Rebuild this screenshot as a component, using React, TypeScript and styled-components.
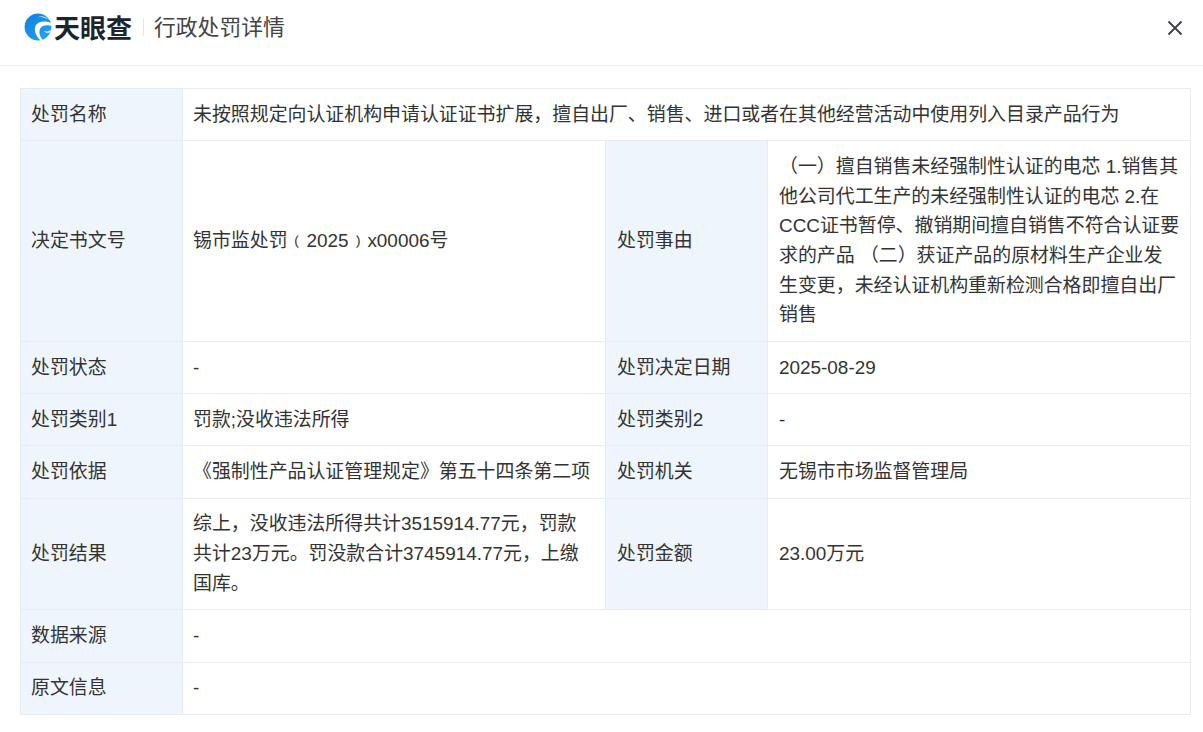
import React from "react";
import styled, { createGlobalStyle } from "styled-components";

const Global = createGlobalStyle`
  html, body { margin: 0; padding: 0; background: #fff; }
  body { font-family: "Liberation Sans", "Noto Sans CJK SC", sans-serif; color: #333; }
`;
const Page = styled.div`
  width: 1203px;
  height: 732px;
  overflow: hidden;
`;
const Header = styled.header`
  height: 54px;
  border-bottom: 1px solid #eef0f3;
  display: flex;
  align-items: flex-start;
  padding: 11px 20px 0 24px;
`;
const Logo = styled.div`
  display: flex;
  align-items: center;
  height: 32px;
  gap: 2px;
`;
const LogoText = styled.span`
  font-family: "Noto Sans CJK SC", sans-serif;
  font-weight: 700;
  font-size: 26px;
  line-height: 32px;
  color: #1c2430;
`;
const Divider = styled.span`
  width: 1px;
  height: 18px;
  background: #e3e6ea;
  margin: 0 10px 0 9px;
`;
const Title = styled.h1`
  margin: -1px 0 0;
  font-family: "Noto Sans CJK SC", sans-serif;
  font-weight: 400;
  font-size: 21.8px;
  line-height: 32px;
  color: #444;
  flex: 1;
`;
const Close = styled.button`
  border: 0;
  background: none;
  padding: 0;
  width: 16px;
  height: 16px;
  margin: 9px 0 0;
  display: block;
`;
const Body = styled.main`
  padding: 22px 12px 0 20px;
`;
const Table = styled.table`
  width: 1170px;
  table-layout: fixed;
  border-collapse: collapse;
  font-size: 18.92px;
  line-height: 29.7px;
  font-family: "Liberation Sans", "Noto Sans CJK SC", sans-serif;
`;
const Row = styled.tr<{ $h: number; $lift?: boolean }>`
  height: ${(p) => p.$h}px;
  & > * {
    padding-bottom: ${(p) => (p.$lift ? 2 : 0)}px;
  }
`;
const Label = styled.th<{ $inset?: number }>`
  background: #eef5fd;
  border: 1px solid #e8ecf1;
  padding-top: 0;
  padding-right: 10px;
  padding-left: ${(p) => p.$inset ?? 10}px;
  font-weight: 400;
  text-align: left;
  color: #333;
`;
const Value = styled.td<{ $inset?: number }>`
  border: 1px solid #e8ecf1;
  padding-top: 0;
  padding-right: 10.4px;
  padding-left: ${(p) => p.$inset ?? 10}px;
  color: #333;
`;

const Swirl = () => (
  <svg width="28" height="28" viewBox="0 0 28 28" aria-hidden="true">
    <defs>
      <linearGradient id="g" x1="0" y1="0" x2="1" y2="1">
        <stop offset="0" stopColor="#0b7fe0" />
        <stop offset="1" stopColor="#27a6ee" />
      </linearGradient>
    </defs>
    <circle cx="14" cy="14" r="13.4" fill="url(#g)" />
    <path d="M28 10.5 C22 7.5 15 8 12 12 C9.5 16 11 22 16.5 27.6 L18.8 27.2 C15.5 23 14.5 18.5 16.5 15 C18.5 12 23 11.5 28 12.8 Z" fill="#fff" />
    <path d="M14 3 C18.5 2.6 22.5 4 25.5 7.2 C22 5.2 18 4 14 3 Z" fill="#fff" opacity=".8" />
    <path d="M20 18 C22.5 19 25 18.5 27.5 16.5 L27 18.8 C24.5 20.8 22 20.5 20 18 Z" fill="#fff" opacity=".75" />
  </svg>
);

export default function App() {
  return (
    <Page>
      <Global />
      <Header>
        <Logo>
          <Swirl />
          <LogoText>天眼查</LogoText>
          <Divider />
        </Logo>
        <Title>行政处罚详情</Title>
        <Close aria-label="关闭">
          <svg width="16" height="16" viewBox="0 0 16 16">
            <path d="M1.5 1.5 L14.5 14.5 M14.5 1.5 L1.5 14.5" stroke="#3a3f45" strokeWidth="1.8" fill="none" />
          </svg>
        </Close>
      </Header>
      <Body>
        <Table>
          <colgroup>
            <col style={{ width: 162 }} />
            <col style={{ width: 423 }} />
            <col style={{ width: 162 }} />
            <col style={{ width: 423 }} />
          </colgroup>
          <tbody>
            <Row $h={52}>
              <Label>处罚名称</Label>
              <Value colSpan={3}>未按照规定向认证机构申请认证证书扩展，擅自出厂、销售、进口或者在其他经营活动中使用列入目录产品行为</Value>
            </Row>
            <Row $h={201}>
              <Label>决定书文号</Label>
              <Value>锡市监处罚﹙2025﹚x00006号</Value>
              <Label $inset={11}>处罚事由</Label>
              <Value $inset={11}>（一）擅自销售未经强制性认证的电芯 1.销售其他公司代工生产的未经强制性认证的电芯 2.在CCC证书暂停、撤销期间擅自销售不符合认证要求的产品 （二）获证产品的原材料生产企业发生变更，未经认证机构重新检测合格即擅自出厂销售</Value>
            </Row>
            <Row $h={52}>
              <Label>处罚状态</Label>
              <Value>-</Value>
              <Label $inset={11}>处罚决定日期</Label>
              <Value $inset={11}>2025-08-29</Value>
            </Row>
            <Row $h={52}>
              <Label>处罚类别1</Label>
              <Value>罚款;没收违法所得</Value>
              <Label $inset={11}>处罚类别2</Label>
              <Value $inset={11}>-</Value>
            </Row>
            <Row $h={53}>
              <Label>处罚依据</Label>
              <Value>《强制性产品认证管理规定》第五十四条第二项</Value>
              <Label $inset={11}>处罚机关</Label>
              <Value $inset={11}>无锡市市场监督管理局</Value>
            </Row>
            <Row $h={111}>
              <Label>处罚结果</Label>
              <Value>综上，没收违法所得共计3515914.77元，罚款共计23万元。罚没款合计3745914.77元，上缴国库。</Value>
              <Label $inset={11}>处罚金额</Label>
              <Value $inset={11}>23.00万元</Value>
            </Row>
            <Row $h={53}>
              <Label>数据来源</Label>
              <Value colSpan={3}>-</Value>
            </Row>
            <Row $h={52} $lift>
              <Label>原文信息</Label>
              <Value colSpan={3}>-</Value>
            </Row>
          </tbody>
        </Table>
      </Body>
    </Page>
  );
}
